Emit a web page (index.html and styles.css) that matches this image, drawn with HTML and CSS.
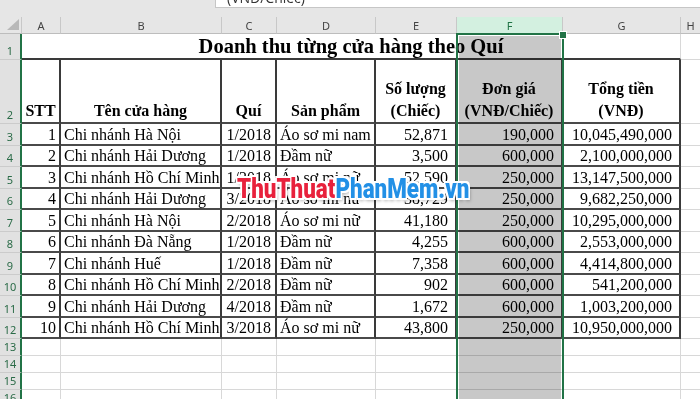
FILE: index.html
```html
<!DOCTYPE html>
<html lang="vi">
<head>
<meta charset="utf-8">
<title>Doanh thu</title>
<link rel="stylesheet" href="styles.css">
</head>
<body>
<div class="app">
  <div class="topbar"><div class="fbox"><span>(VNĐ/Chiếc)</span></div></div>
  <div class="sheet">
    <div class="ch corner"><i class="tri"></i></div>
    <div class="ch">A</div><div class="ch">B</div><div class="ch">C</div><div class="ch">D</div><div class="ch">E</div><div class="ch chsel">F</div><div class="ch">G</div><div class="ch last">H</div>

    <div class="rh">1</div>
    <div class="c title">Doanh thu từng cửa hàng theo Quí</div>
    <div class="c last"></div>

    <div class="rh">2</div>
    <div class="c t hd">STT</div>
    <div class="c t hd">Tên cửa hàng</div>
    <div class="c t hd">Quí</div>
    <div class="c t hd">Sản phẩm</div>
    <div class="c t hd">Số lượng<br>(Chiếc)</div>
    <div class="c t hd">Đơn giá<br>(VNĐ/Chiếc)</div>
    <div class="c t hd">Tổng tiền<br>(VNĐ)</div>
    <div class="c last"></div>

    <div class="rh">3</div><div class="c t r stt">1</div><div class="c t l">Chi nhánh Hà Nội</div><div class="c t r q">1/2018</div><div class="c t l">Áo sơ mi nam</div><div class="c t r n">52,871</div><div class="c t r n">190,000</div><div class="c t r n">10,045,490,000</div><div class="c last"></div>
    <div class="rh">4</div><div class="c t r stt">2</div><div class="c t l">Chi nhánh Hải Dương</div><div class="c t r q">1/2018</div><div class="c t l">Đầm nữ</div><div class="c t r n">3,500</div><div class="c t r n">600,000</div><div class="c t r n">2,100,000,000</div><div class="c last"></div>
    <div class="rh">5</div><div class="c t r stt">3</div><div class="c t l">Chi nhánh Hồ Chí Minh</div><div class="c t r q">1/2018</div><div class="c t l">Áo sơ mi nữ</div><div class="c t r n">52,590</div><div class="c t r n">250,000</div><div class="c t r n">13,147,500,000</div><div class="c last"></div>
    <div class="rh">6</div><div class="c t r stt">4</div><div class="c t l">Chi nhánh Hải Dương</div><div class="c t r q">3/2018</div><div class="c t l">Áo sơ mi nữ</div><div class="c t r n">38,729</div><div class="c t r n">250,000</div><div class="c t r n">9,682,250,000</div><div class="c last"></div>
    <div class="rh">7</div><div class="c t r stt">5</div><div class="c t l">Chi nhánh Hà Nội</div><div class="c t r q">2/2018</div><div class="c t l">Áo sơ mi nữ</div><div class="c t r n">41,180</div><div class="c t r n">250,000</div><div class="c t r n">10,295,000,000</div><div class="c last"></div>
    <div class="rh">8</div><div class="c t r stt">6</div><div class="c t l">Chi nhánh Đà Nẵng</div><div class="c t r q">1/2018</div><div class="c t l">Đầm nữ</div><div class="c t r n">4,255</div><div class="c t r n">600,000</div><div class="c t r n">2,553,000,000</div><div class="c last"></div>
    <div class="rh">9</div><div class="c t r stt">7</div><div class="c t l">Chi nhánh Huế</div><div class="c t r q">1/2018</div><div class="c t l">Đầm nữ</div><div class="c t r n">7,358</div><div class="c t r n">600,000</div><div class="c t r n">4,414,800,000</div><div class="c last"></div>
    <div class="rh">10</div><div class="c t r stt">8</div><div class="c t l">Chi nhánh Hồ Chí Minh</div><div class="c t r q">2/2018</div><div class="c t l">Đầm nữ</div><div class="c t r n">902</div><div class="c t r n">600,000</div><div class="c t r n">541,200,000</div><div class="c last"></div>
    <div class="rh">11</div><div class="c t r stt">9</div><div class="c t l">Chi nhánh Hải Dương</div><div class="c t r q">4/2018</div><div class="c t l">Đầm nữ</div><div class="c t r n">1,672</div><div class="c t r n">600,000</div><div class="c t r n">1,003,200,000</div><div class="c last"></div>
    <div class="rh">12</div><div class="c t r stt">10</div><div class="c t l">Chi nhánh Hồ Chí Minh</div><div class="c t r q">3/2018</div><div class="c t l">Áo sơ mi nữ</div><div class="c t r n">43,800</div><div class="c t r n">250,000</div><div class="c t r n">10,950,000,000</div><div class="c last"></div>

    <div class="rh">13</div><div class="c"></div><div class="c"></div><div class="c"></div><div class="c"></div><div class="c"></div><div class="c"></div><div class="c"></div><div class="c last"></div>
    <div class="rh">14</div><div class="c"></div><div class="c"></div><div class="c"></div><div class="c"></div><div class="c"></div><div class="c"></div><div class="c"></div><div class="c last"></div>
    <div class="rh">15</div><div class="c"></div><div class="c"></div><div class="c"></div><div class="c"></div><div class="c"></div><div class="c"></div><div class="c"></div><div class="c last"></div>
    <div class="rh">16</div><div class="c"></div><div class="c"></div><div class="c"></div><div class="c"></div><div class="c"></div><div class="c"></div><div class="c"></div><div class="c last"></div>
  </div>
  <div class="sel"></div>
  <div class="wm"><span class="red">ThuThuat</span><span class="blue">PhanMem</span><span class="blue">.vn</span></div>
</div>
</body>
</html>
```
FILE: styles.css
```css
* { box-sizing: border-box; }
html, body { margin: 0; padding: 0; }
body { background: #fff; }
.app {
  position: relative;
  width: 700px;
  height: 399px;
  overflow: hidden;
  background: #fff;
  font-family: "Liberation Serif", "Times New Roman", serif;
}
.topbar {
  height: 17px;
  background: #e6e6e6;
  display: flex;
}
.fbox {
  margin-left: 215px;
  flex: 1;
  height: 8px;
  background: #fff;
  border-left: 1px solid #c6c6c6;
  border-bottom: 1px solid #c6c6c6;
  overflow: hidden;
  font-family: "Open Sans", "Noto Sans", sans-serif;
  font-size: 14px;
  line-height: 16px;
  color: #333;
}
.fbox span { display: block; margin-top: -10px; padding-left: 11px; }

.sheet {
  display: grid;
  grid-template-columns: 22px 39px 161px 55px 99px 81px 106px 118px 19px;
  grid-template-rows: 17px 26px 64px 22px 21px 22px 21px 22px 21px 22px 21px 22px 21px 17px 17px 17px 17px;
}
.ch {
  background: #e6e6e6;
  border-right: 1px solid #c8c8c8;
  border-bottom: 1px solid #bdbdbd;
  font-family: "Noto Sans", "Open Sans", sans-serif;
  font-size: 11px;
  color: #444;
  display: flex;
  align-items: center;
  justify-content: center;
}
.ch.last { border-right: none; }
.ch.chsel { background: #d3f0e0; color: #217346; }
.corner { position: relative; border-right: 1px solid #c8c8c8; }
.tri {
  position: absolute;
  right: 2px;
  bottom: 3px;
  width: 12px;
  height: 11px;
  background: #b8b8b8;
  clip-path: polygon(100% 0, 100% 100%, 0 100%);
}
.rh {
  background: #e1e1e1;
  border-right: 2px solid #217346;
  border-bottom: 1px solid #cbcbcb;
  font-family: "Noto Sans", "Open Sans", sans-serif;
  font-size: 11px;
  line-height: 13px;
  color: #2a6b47;
  display: flex;
  align-items: flex-end;
  justify-content: center;
  padding-bottom: 2px;
}
.c {
  border-right: 1px solid #d8d8d8;
  border-bottom: 1px solid #d8d8d8;
  display: flex;
  align-items: flex-end;
  white-space: nowrap;
  overflow: hidden;
  font-size: 16px;
  line-height: 18px;
  color: #000;
}
.c.last { border-right: none; }
.title {
  grid-column: span 7;
  justify-content: center;
  font-weight: bold;
  font-size: 20.5px;
  line-height: 23px;
  border-bottom: 2px solid #3a3a3a;
}
.t {
  border-right: 2px solid #3a3a3a;
  border-bottom: 2px solid #4a4a4a;
}
.hd {
  font-weight: bold;
  text-align: center;
  justify-content: center;
  line-height: 22px;
  overflow: visible;
}
.r { justify-content: flex-end; }
.l { padding-left: 3px; }
.stt { padding-right: 3px; }
.q { padding-right: 4px; }
.n { padding-right: 7px; }

.sel {
  position: absolute;
  left: 456px;
  top: 33px;
  width: 108px;
  height: 380px;
  border: 2px solid #217346;
  border-bottom: none;
}
.sel::before {
  content: "";
  position: absolute;
  left: 1px;
  right: 1px;
  top: 1px;
  bottom: 0;
  background: #c8c8c8;
  mix-blend-mode: multiply;
}
.sel::after {
  content: "";
  position: absolute;
  right: -5px;
  top: -4px;
  width: 6px;
  height: 6px;
  background: #217346;
  border: 1px solid #fff;
}
.wm {
  position: absolute;
  left: 237px;
  top: 173px;
  font-family: Roboto, "Noto Sans", sans-serif;
  font-weight: 900;
  font-size: 28px;
  line-height: 32px;
  white-space: nowrap;
  transform: scaleX(0.8);
  transform-origin: left top;
  text-shadow: -2px 0 #fff, 2px 0 #fff, 0 -2px #fff, 0 2px #fff,
    -2px -2px #fff, 2px 2px #fff, -2px 2px #fff, 2px -2px #fff,
    2px 3px 4px rgba(0,0,0,0.35);
}
.red { color: #e8213c; }
.blue { color: #2290e6; }
```
